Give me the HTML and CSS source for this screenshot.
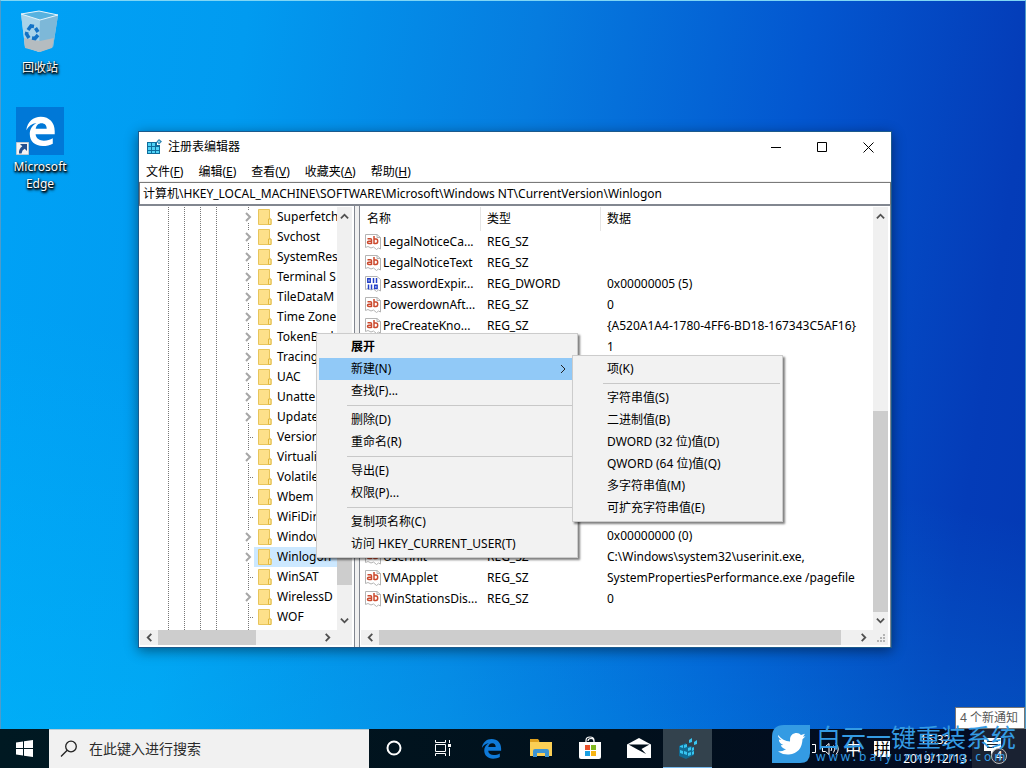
FILE: index.html
```html
<!DOCTYPE html>
<html lang="zh-CN">
<head>
    <meta charset="UTF-8">
    <meta name="viewport" content="width=device-width, initial-scale=1.0">
    <title>注册表编辑器</title>
    <link rel="stylesheet" href="styles.css">
</head>
<body>
    <!-- 图标 -->
    <svg class="sprite" aria-hidden="true">
        <symbol id="folder" viewBox="0 0 14 16">
            <path d="M.5 .5h11v9.500h1.500v5.500H.5z" fill="#fde08a" stroke="#e8c55c"/>
            <path d="M10.500 15.500V10h2.500v5.500z" fill="#fbe9a8" stroke="#e3b93e"/>
        </symbol>
        <symbol id="sz" viewBox="0 0 16 16">
            <path d="M.5 .5h11.500l3.500 3v11.500l-2-1-2 1.500-3-2.500-2.500 1-3-1.500-2.500 1z" fill="#fff" stroke="#b4b4b4"/>
            <path d="M12 .5v3h3.500" fill="none" stroke="#b4b4b4"/>
            <path d="M2.500 4.800h3q1 0 1 1V10M6.500 7.200H3.800Q2.500 7.200 2.500 8.300t1.300 1.100h2.700M9 2v8M9 5h2q1.700 0 1.700 2.200T11 9.400H9" fill="none" stroke="#cc4a2e" stroke-width="1.500"/>
        </symbol>
        <symbol id="dword" viewBox="0 0 16 16">
            <path d="M.5 .5h11.500l3.500 3v11.500l-2-1-2 1.500-3-2.500-2.500 1-3-1.500-2.500 1z" fill="#fff" stroke="#b4b4b4"/>
            <path d="M2.800 2.800h2.400v3.400H2.800zM8.500 2v5M11.500 2v5M3.500 8.500v5M6.500 8.500v5M9.700 9.200h2.400v3.400H9.700z" fill="none" stroke="#2340c8" stroke-width="1.500"/>
        </symbol>
        <symbol id="left" viewBox="0 0 10 10"><path d="M7 1L3 5l4 4" fill="none" stroke="#505050" stroke-width="2"/></symbol>
        <symbol id="right" viewBox="0 0 10 10"><path d="M3 1l4 4-4 4" fill="none" stroke="#505050" stroke-width="2"/></symbol>
        <symbol id="up" viewBox="0 0 10 10"><path d="M1 7l4-4 4 4" fill="none" stroke="#505050" stroke-width="2"/></symbol>
        <symbol id="down" viewBox="0 0 10 10"><path d="M1 3l4 4 4-4" fill="none" stroke="#505050" stroke-width="2"/></symbol>
        <symbol id="expand" viewBox="0 0 8 10"><path d="M2 1l4 4-4 4" fill="none" stroke="#a6a6a6" stroke-width="2"/></symbol>
        <symbol id="edge" viewBox="0 0 24 24">
            <path d="M1 11.500C1.800 4.800 6.400 1 12.200 1 19 1 23 5.800 23 12v2.600H8.200c.3 3.300 3.200 4.900 6.400 4.900 2.600 0 4.900-.7 6.900-1.900v4.200c-2.200 1.200-4.800 1.800-7.700 1.800C7.600 23.600 3.700 20 3.700 14.400c0-3.700 2-6.800 5.200-8.500C5.500 6.300 2.600 8.300 1 11.500zM8.300 10.200h8.500c0-2.500-1.400-4.200-4-4.200-2.400 0-4.100 1.700-4.500 4.200z" fill="currentColor"/>
        </symbol>
    </svg>

    <main class="desktop">
        <a href="#" class="shortcut recycle">
            <svg width="40" height="44" viewBox="0 0 40 44">
                <path d="M1 4l18-3 19 4-5 32-14 5-14-5z" fill="#9fcfea"/>
                <path d="M1 4l19 6-1 32-14-5z" fill="#a8d3e9"/>
                <path d="M20 10l18-5-5 32-14 5z" fill="#7db8d8"/>
                <path d="M4 28l16 3 14-3-2 10-12 4-15-4z" fill="#b5bcc0"/>
                <path d="M1 4l18-3 19 4-18 5z" fill="#57b2df" stroke="#e4f4fc"/>
                <path d="M8 20l3-4 3 .5M15.500 18l2.500 4M18 25l-3 3.500-3-.5M9 28l-2.500-4 .5-2" fill="none" stroke="#1272c6" stroke-width="3.500"/>
            </svg>
            <span>回收站</span>
        </a>
        <a href="#" class="shortcut edge">
            <span class="edge-tile">
                <svg width="31" height="32"><use href="#edge"/></svg>
                <svg class="link-arrow" width="13" height="13" viewBox="0 0 13 13">
                    <path d="M.5 .5h12v12H.5z" fill="#f4f4f4" stroke="#c0c8d0"/>
                    <path d="M4 2h7v7L8.700 6.700Q6 8 5.500 11.500H3Q2.500 7 6.300 4.300z" fill="#24508f"/>
                </svg>
            </span>
            <span>Microsoft<br>Edge</span>
        </a>

        <section class="window">
            <header class="titlebar">
                <svg width="16" height="16" viewBox="0 0 16 16">
                    <path d="M1 3h10v3h3v9H1z" fill="#0e6d9c"/>
                    <path d="M2 4h3v3H2zM6 4h3v3H6zM2 8h3v3H2zM6 8h3v3H6zM10 8h3v3h-3zM2 12h3v2H2zM6 12h3v2H6zM10 12h3v2h-3z" fill="#4fd2f6"/>
                    <path d="M13 0l3 2.500L13 5.500 10.500 2.500z" fill="#3188b4"/>
                    <path d="M13 1.500l1.200 1.200L13 4l-1.200-1.300z" fill="#8be0fa"/>
                </svg>
                <h1>注册表编辑器</h1>
                <div class="window-buttons">
                    <button type="button" aria-label="最小化"><svg width="11" height="11"><path d="M0 5.500h10" stroke="#000"/></svg></button>
                    <button type="button" aria-label="最大化"><svg width="11" height="11"><path d="M.5 .5h9v9h-9z" fill="none" stroke="#000"/></svg></button>
                    <button type="button" aria-label="关闭"><svg width="11" height="11"><path d="M.5 .5l10 10M10.500 .5l-10 10" stroke="#000"/></svg></button>
                </div>
            </header>
            <nav class="menubar">
                <button type="button">文件(<u>F</u>)</button>
                <button type="button">编辑(<u>E</u>)</button>
                <button type="button">查看(<u>V</u>)</button>
                <button type="button">收藏夹(<u>A</u>)</button>
                <button type="button">帮助(<u>H</u>)</button>
            </nav>
            <input class="address" type="text" aria-label="地址" value="计算机\HKEY_LOCAL_MACHINE\SOFTWARE\Microsoft\Windows NT\CurrentVersion\Winlogon">

            <div class="panes">
                <div class="pane tree-pane">
                    <ul class="tree">
                        <li><i class="toggle"><svg><use href="#expand"/></svg></i><span><svg><use href="#folder"/></svg>Superfetch</span></li>
                        <li><i class="toggle"><svg><use href="#expand"/></svg></i><span><svg><use href="#folder"/></svg>Svchost</span></li>
                        <li><i class="toggle"><svg><use href="#expand"/></svg></i><span><svg><use href="#folder"/></svg>SystemRes</span></li>
                        <li><i class="toggle"><svg><use href="#expand"/></svg></i><span><svg><use href="#folder"/></svg>Terminal S</span></li>
                        <li><i class="toggle"><svg><use href="#expand"/></svg></i><span><svg><use href="#folder"/></svg>TileDataM</span></li>
                        <li><i class="toggle"><svg><use href="#expand"/></svg></i><span><svg><use href="#folder"/></svg>Time Zone</span></li>
                        <li><i class="toggle"><svg><use href="#expand"/></svg></i><span><svg><use href="#folder"/></svg>TokenBrok</span></li>
                        <li><i class="toggle"><svg><use href="#expand"/></svg></i><span><svg><use href="#folder"/></svg>Tracing</span></li>
                        <li><i class="toggle"><svg><use href="#expand"/></svg></i><span><svg><use href="#folder"/></svg>UAC</span></li>
                        <li><i class="toggle"><svg><use href="#expand"/></svg></i><span><svg><use href="#folder"/></svg>Unatte</span></li>
                        <li><i class="toggle"><svg><use href="#expand"/></svg></i><span><svg><use href="#folder"/></svg>Update</span></li>
                        <li><i class="leaf"></i><span><svg><use href="#folder"/></svg>Version</span></li>
                        <li><i class="toggle"><svg><use href="#expand"/></svg></i><span><svg><use href="#folder"/></svg>Virtuali</span></li>
                        <li><i class="leaf"></i><span><svg><use href="#folder"/></svg>Volatile</span></li>
                        <li><i class="leaf"></i><span><svg><use href="#folder"/></svg>Wbem</span></li>
                        <li><i class="leaf"></i><span><svg><use href="#folder"/></svg>WiFiDir</span></li>
                        <li><i class="toggle"><svg><use href="#expand"/></svg></i><span><svg><use href="#folder"/></svg>Window</span></li>
                        <li class="selected"><i class="toggle"><svg><use href="#expand"/></svg></i><span><svg><use href="#folder"/></svg>Winlogon</span></li>
                        <li><i class="leaf"></i><span><svg><use href="#folder"/></svg>WinSAT</span></li>
                        <li><i class="toggle"><svg><use href="#expand"/></svg></i><span><svg><use href="#folder"/></svg>WirelessD</span></li>
                        <li><i class="leaf"></i><span><svg><use href="#folder"/></svg>WOF</span></li>
                    </ul>
                    <div class="vscroll">
                        <svg><use href="#up"/></svg>
                        <div class="track"><div class="thumb tree-thumb"></div></div>
                        <svg><use href="#down"/></svg>
                    </div>
                    <div class="hscroll">
                        <svg><use href="#left"/></svg>
                        <div class="track"><div class="thumb tree-hthumb"></div></div>
                        <svg><use href="#right"/></svg>
                    </div>
                    <div class="corner"></div>
                </div>

                <div class="pane list-pane">
                    <div class="list">
                        <table>
                            <thead>
                                <tr><th class="name">名称</th><th class="type">类型</th><th>数据</th></tr>
                            </thead>
                            <tbody>
                                <tr><td><svg><use href="#sz"/></svg>LegalNoticeCa...</td><td>REG_SZ</td><td></td></tr>
                                <tr><td><svg><use href="#sz"/></svg>LegalNoticeText</td><td>REG_SZ</td><td></td></tr>
                                <tr><td><svg><use href="#dword"/></svg>PasswordExpir...</td><td>REG_DWORD</td><td>0x00000005 (5)</td></tr>
                                <tr><td><svg><use href="#sz"/></svg>PowerdownAft...</td><td>REG_SZ</td><td>0</td></tr>
                                <tr><td><svg><use href="#sz"/></svg>PreCreateKno...</td><td>REG_SZ</td><td>{A520A1A4-1780-4FF6-BD18-167343C5AF16}</td></tr>
                                <tr><td></td><td></td><td>1</td></tr>
                                <tr><td></td><td></td><td></td></tr>
                                <tr><td></td><td></td><td></td></tr>
                                <tr><td></td><td></td><td></td></tr>
                                <tr><td></td><td></td><td></td></tr>
                                <tr><td></td><td></td><td></td></tr>
                                <tr><td></td><td></td><td></td></tr>
                                <tr><td></td><td></td><td></td></tr>
                                <tr><td></td><td></td><td></td></tr>
                                <tr><td></td><td></td><td>0x00000000 (0)</td></tr>
                                <tr><td><svg><use href="#sz"/></svg>Userinit</td><td>REG_SZ</td><td>C:\Windows\system32\userinit.exe,</td></tr>
                                <tr><td><svg><use href="#sz"/></svg>VMApplet</td><td>REG_SZ</td><td>SystemPropertiesPerformance.exe /pagefile</td></tr>
                                <tr><td><svg><use href="#sz"/></svg>WinStationsDis...</td><td>REG_SZ</td><td>0</td></tr>
                            </tbody>
                        </table>
                    </div>
                    <div class="vscroll">
                        <svg><use href="#up"/></svg>
                        <div class="track"><div class="thumb list-thumb"></div></div>
                        <svg><use href="#down"/></svg>
                    </div>
                    <div class="hscroll">
                        <svg><use href="#left"/></svg>
                        <div class="track"><div class="thumb list-hthumb"></div></div>
                        <svg><use href="#right"/></svg>
                    </div>
                    <div class="corner">
                        <svg width="9" height="9" viewBox="0 0 9 9"><path d="M6 0h2v2H6zM3 3h2v2H3zM6 3h2v2H6zM0 6h2v2H0zM3 6h2v2H3zM6 6h2v2H6z" fill="#b4b4b4"/></svg>
                    </div>
                </div>
            </div>
        </section>

        <div class="menu context-menu">
            <button type="button" class="default">展开</button>
            <button type="button" class="active">新建(N)<svg width="8" height="10" viewBox="0 0 8 10"><path d="M2 1l4 4-4 4" fill="none" stroke="#222"/></svg></button>
            <button type="button">查找(F)...</button>
            <hr>
            <button type="button">删除(D)</button>
            <button type="button">重命名(R)</button>
            <hr>
            <button type="button">导出(E)</button>
            <button type="button">权限(P)...</button>
            <hr>
            <button type="button">复制项名称(C)</button>
            <button type="button">访问 HKEY_CURRENT_USER(T)</button>
        </div>
        <div class="menu submenu">
            <button type="button">项(K)</button>
            <hr>
            <button type="button">字符串值(S)</button>
            <button type="button">二进制值(B)</button>
            <button type="button">DWORD (32 位)值(D)</button>
            <button type="button">QWORD (64 位)值(Q)</button>
            <button type="button">多字符串值(M)</button>
            <button type="button">可扩充字符串值(E)</button>
        </div>

        <div class="tooltip">4 个新通知</div>
    </main>

    <footer class="taskbar">
        <button type="button" class="start" aria-label="开始">
            <svg width="17" height="17" viewBox="0 0 17 17"><path d="M0 2.500l7-1V8H0zM8 1.300L17 0v8H8zM0 9h7v6.500l-7-1zM8 9h9v8l-9-1.300z" fill="#fff"/></svg>
        </button>
        <label class="search">
            <svg width="18" height="18" viewBox="0 0 18 18"><circle cx="11" cy="6.500" r="5.300" fill="none" stroke="#222" stroke-width="1.300"/><path d="M7.200 10.300L1 16.500" stroke="#222" stroke-width="1.300"/></svg>
            <input type="text" placeholder="在此键入进行搜索" aria-label="搜索">
        </label>
        <nav class="apps">
            <button type="button" aria-label="Cortana"><svg width="16" height="16"><circle cx="8" cy="8" r="6.500" fill="none" stroke="#fff" stroke-width="2"/></svg></button>
            <button type="button" aria-label="任务视图"><svg width="18" height="16" viewBox="0 0 18 16"><path d="M1.500 0v2.500h10V0M1.500 4.500h10v7h-10zM1.500 16v-2.500h10V16M15.500 0v3M15.500 8v8" fill="none" stroke="#fff"/><path d="M14 4h3v3h-3z" fill="#fff"/></svg></button>
            <button type="button" aria-label="Edge" class="edge-app"><svg width="21" height="21"><use href="#edge"/></svg></button>
            <button type="button" aria-label="文件资源管理器"><svg width="22" height="19" viewBox="0 0 22 19"><path d="M0 1h8l1.500 2H22v14H0z" fill="#fbcf55"/><path d="M0 0h8l1.500 2-1.500 1H0z" fill="#dfa01d"/><path d="M3 18v-6q0-2 2-2h12q2 0 2 2v6h-4v-4H7v4z" fill="#3d94d2"/></svg></button>
            <button type="button" aria-label="应用商店"><svg width="24" height="24" viewBox="0 0 24 24"><path d="M8 7V4.500q0-3.500 4-3.500t4 3.500V7M10 5q0-2.500 3-2.500T16 5v2" fill="none" stroke="#fff" stroke-width="1.200"/><path d="M1 6h22v15q0 2-2 2H3q-2 0-2-2z" fill="#fff"/><path d="M7 9h5v5H7z" fill="#e8502a"/><path d="M13 9h5v5h-5z" fill="#80b81f"/><path d="M7 15h5v5H7z" fill="#1ba0e2"/><path d="M13 15h5v5h-5z" fill="#f8b412"/></svg></button>
            <button type="button" aria-label="邮件"><svg width="24" height="20" viewBox="0 0 24 20"><path d="M0 6.500L12 0l12 6.500V20H0z" fill="#fff"/><path d="M1.500 6.500h21L14.500 11l4.500 5-8.500-4.500z" fill="#02101c"/></svg></button>
            <button type="button" aria-label="注册表编辑器" class="running"><svg width="22" height="22" viewBox="0 0 22 22"><path d="M2 9l7-3v4l5-1 3 2v7l-8 4-7-3z" fill="#126c94"/><path d="M3 9l3-1v3l-3-1zM7 8l3-1v3L7 11zM3 13l3 1v3l-3-1zM7 14l3 1v3l-3-1zM11 11l3-1v3l-3 1zM11 16l3-1v3l-3 1zM15 11l2-1v3l-2 1zM15 15l2-1v3l-2 1zM12 3l3-2v4l-3 1zM17 5l3-2v4l-3 1z" fill="#38c5f0"/></svg></button>
        </nav>
        <div class="tray">
            <svg width="5" height="12" viewBox="0 0 5 12"><path d="M0 1.500h3.500v8H0" fill="none" stroke="#fff"/></svg>
            <svg width="18" height="14" viewBox="0 0 18 14"><path d="M.5 4.500h3L7 1.500v11l-3.500-3h-3zM9 5q1.500 2 0 4M11.500 3.500q3 3.500 0 7M14 1.500q4.500 5.500 0 11" fill="none" stroke="#fff"/></svg>
            <span class="ime">中</span>
            <span class="ime pinyin">拼</span>
            <time class="clock">15:32<br>2019/12/13</time>
            <button type="button" class="notifications" aria-label="通知">
                <svg width="17" height="17" viewBox="0 0 17 17"><path d="M0 0h17v13h-6l-4 4v-4H0z" fill="#fff"/><path d="M3 3.500h11M3 6.500h11M3 9.500h7" stroke="#17202a"/></svg>
                <span class="badge">4</span>
            </button>
        </div>
    </footer>

    <div class="watermark">
        <svg width="38" height="38" viewBox="0 0 38 38">
            <path d="M12 0h26v28q0 10-10 10H0V12Q0 0 12 0z" fill="#349be3"/>
            <path d="M6 10q5 6 12 6.500-1-7 5.500-8.500 3.500-.5 5.500 2l4-1.200-2 3 2.500-.5-3 3Q30 28 17 29.500q-6 .5-11-3 5 0 8-2.300-4-.8-5.200-4l2.500-.2Q7 18 6.800 14.500l2.500 .6Q5.500 12 6 10z" fill="#fff"/>
        </svg>
        <div>
            <strong>白云一键重装系统</strong>
            <span>www.baiyunxitong.com</span>
        </div>
    </div>
</body>
</html>
```
FILE: styles.css
```css
* {
    margin: 0;
    padding: 0;
    box-sizing: border-box;
}

body {
    display: flex;
    flex-direction: column;
    height: 100vh;
    overflow: hidden;
    font-family: "Noto Sans", "Noto Sans CJK SC", sans-serif;
    font-size: 12px;
    line-height: 16px;
    color: #000;
}

button,
input {
    font: inherit;
    color: inherit;
    background: none;
    border: 0;
    outline: 0;
}

ul {
    list-style: none;
}

svg {
    flex: none;
}

.sprite {
    position: absolute;
    width: 0;
    height: 0;
}

/* 桌面 */
.desktop {
    position: relative;
    flex: 1;
    padding: 9px 0 0 4px;
    border: 1px solid #4d9ccb;
    border-bottom: 0;
    border-top-color: #7fd6f5;
    background:
        linear-gradient(12deg, rgba(0, 205, 255, 0.3), transparent 45%),
        linear-gradient(98deg, #00a2f6 0%, #019bf0 22%, #067cdf 48%, #0357d0 72%, #043cb8 92%, #0439b4 100%);
}

.shortcut {
    display: flex;
    flex-direction: column;
    align-items: center;
    width: 70px;
    color: #fff;
    text-align: center;
    text-decoration: none;
    line-height: 17px;
    text-shadow: 0 1px 2px #000, 1px 1px 2px #000, 1px 2px 3px #000;
}

.recycle {
    height: 97px;
    gap: 5px;
}

.edge {
    gap: 3px;
}

.edge-tile {
    position: relative;
    display: flex;
    align-items: center;
    justify-content: center;
    width: 48px;
    height: 48px;
    background: #0078d7;
}

.link-arrow {
    position: absolute;
    left: 0;
    bottom: 0;
}

/* 窗口 */
.window {
    position: absolute;
    top: 130px;
    right: 133px;
    bottom: 81px;
    left: 137px;
    display: flex;
    flex-direction: column;
    background: #fff;
    border: 1px solid #1c5a8c;
    box-shadow: 0 3px 12px rgba(0, 0, 0, 0.45);
}

.titlebar {
    display: flex;
    align-items: center;
    height: 30px;
    padding-left: 7px;
}

.titlebar h1 {
    flex: 1;
    padding-left: 6px;
    font-size: 12px;
    font-weight: 400;
}

.window-buttons {
    display: flex;
}

.window-buttons button {
    display: flex;
    align-items: center;
    justify-content: center;
    width: 46px;
    height: 28px;
}

.menubar {
    display: flex;
    gap: 15px;
    height: 20px;
    padding-left: 7px;
    border-bottom: 1px solid #f0f0f0;
}

.address {
    height: 24px;
    padding: 0 3px 1px;
    border: 1px solid #7a7a7a;
    border-bottom: 2px solid #828790;
}

.panes {
    display: flex;
    flex: 1;
    min-height: 0;
    gap: 4px;
    background: #f0f0f0;
}

.pane {
    display: grid;
    grid-template-columns: 1fr 15px;
    grid-template-rows: 1fr 15px;
    padding: 1px 2px 2px 1px;
    border-right: 1px solid #828790;
    background: #fff;
}

.tree-pane {
    width: 216px;
}

.list-pane {
    flex: 1;
    min-width: 0;
    border-left: 1px solid #828790;
}

.tree {
    overflow: hidden;
    background:
        repeating-linear-gradient(#777 0 1px, #fff 1px 2px) 28px 0 / 1px 100% no-repeat,
        repeating-linear-gradient(#777 0 1px, #fff 1px 2px) 44px 0 / 1px 100% no-repeat,
        repeating-linear-gradient(#777 0 1px, #fff 1px 2px) 60px 0 / 1px 100% no-repeat,
        repeating-linear-gradient(#777 0 1px, #fff 1px 2px) 76px 0 / 1px 100% no-repeat,
        repeating-linear-gradient(#777 0 1px, #fff 1px 2px) 108px 0 / 1px 100% no-repeat;
}

.tree li {
    display: flex;
    height: 20px;
    padding-left: 101px;
    line-height: 20px;
}

.tree span {
    display: flex;
    flex: 1;
    align-items: center;
    gap: 5px;
    min-width: 0;
    padding-left: 4px;
    overflow: hidden;
    white-space: nowrap;
}

.tree span svg {
    width: 14px;
    height: 16px;
}

.toggle,
.leaf {
    display: flex;
    align-items: center;
    width: 13px;
    padding-left: 3px;
}

.toggle svg {
    width: 8px;
    height: 12px;
    background: #fff;
}

.leaf {
    background: repeating-linear-gradient(90deg, #777 0 1px, #fff 1px 2px) 7px 10px / 6px 1px no-repeat;
}

.selected span {
    background: #cce8ff;
}

.vscroll,
.hscroll {
    display: flex;
    align-items: center;
    background: #f0f0f0;
}

.vscroll {
    flex-direction: column;
    padding: 5px 0;
}

.hscroll {
    padding: 0 5px;
}

.vscroll svg,
.hscroll svg {
    width: 9px;
    height: 9px;
}

.track {
    display: flex;
    flex: 1;
    align-self: stretch;
}

.vscroll .track {
    flex-direction: column;
    justify-content: flex-end;
    padding: 4px 0;
}

.hscroll .track {
    padding: 0 4px;
}

.thumb {
    background: #cdcdcd;
}

.tree-thumb {
    height: 28%;
    margin-bottom: 27px;
}

.tree-hthumb {
    width: 61%;
}

.list-thumb {
    height: 52%;
}

.list-hthumb {
    width: 97%;
}

.corner {
    display: flex;
    align-items: flex-end;
    justify-content: flex-end;
    padding: 2px;
    background: #f0f0f0;
}

/* 值列表 */
.list {
    overflow: hidden;
}

table {
    width: 100%;
    border-spacing: 0;
    table-layout: fixed;
    white-space: nowrap;
}

th {
    height: 24px;
    padding-left: 6px;
    font-weight: 400;
    text-align: left;
    border-right: 1px solid #e5e5e5;
}

th:last-child {
    border-right: 0;
}

.name,
.type {
    width: 120px;
}

td {
    height: 21px;
    padding-left: 6px;
}

td:first-child {
    padding-left: 4px;
}

td svg {
    width: 16px;
    height: 16px;
    margin-right: 2px;
    vertical-align: top;
}

/* 右键菜单 */
.menu {
    position: absolute;
    padding: 2px;
    background: #f2f2f2;
    border: 1px solid #ccc;
    box-shadow: 2px 2px 2px rgba(0, 0, 0, 0.5);
}

.menu button {
    display: flex;
    align-items: center;
    justify-content: space-between;
    width: 100%;
    height: 22px;
    padding: 0 8px 0 32px;
    text-align: left;
    white-space: nowrap;
}

.menu hr {
    height: 1px;
    margin: 3px 0 3px 28px;
    border: 0;
    background: #c8c8c8;
}

.menu .default {
    font-weight: 700;
}

.menu .active {
    background: #91c9f7;
}

.context-menu {
    top: 332px;
    left: 315px;
    width: 262px;
}

.submenu {
    top: 354px;
    left: 571px;
    width: 211px;
}

.tooltip {
    position: absolute;
    right: 0;
    bottom: 0;
    padding: 2px 6px 2px 4px;
    color: #575757;
    background: #fff;
    border: 1px solid #767676;
}

/* 任务栏 */
.taskbar {
    display: flex;
    height: 39px;
    color: #fff;
    background: linear-gradient(90deg, #001922, #01101c 60%, #030b24);
}

.start {
    width: 49px;
}

.start svg {
    vertical-align: middle;
}

.search {
    display: flex;
    align-items: center;
    gap: 11px;
    width: 320px;
    padding-left: 11px;
    color: #2b2b2b;
    background: #f1f1f1;
    border-top: 1px solid #b9cdd6;
}

.search input {
    width: 240px;
    font-size: 14px;
}

.search input::placeholder {
    color: #2b2b2b;
}

.apps {
    display: flex;
    flex: 1;
}

.apps button {
    display: flex;
    align-items: center;
    justify-content: center;
    width: 49px;
    border-bottom: 1px solid transparent;
}

.apps .edge-app {
    color: #0f7ad8;
}

.apps .running {
    background: #33424d;
    border-color: #76b9ed;
}

.tray {
    display: flex;
    align-items: center;
    gap: 5px;
}

.ime {
    width: 16px;
    font-size: 16px;
}

.pinyin {
    margin: 0 8px;
    color: #000;
    background: #fff;
}

.clock {
    line-height: 19px;
    text-align: center;
}

.notifications {
    position: relative;
    width: 54px;
    height: 39px;
    padding-right: 14px;
    background: #1a2232;
}

.badge {
    position: absolute;
    right: 19px;
    bottom: 4px;
    width: 16px;
    height: 16px;
    border: 1px solid #bbb;
    border-radius: 8px;
    background: #2a3242;
    line-height: 14px;
}

/* 水印 */
.watermark {
    position: absolute;
    right: 10px;
    bottom: 5px;
    display: flex;
    gap: 6px;
    color: #349be3;
    pointer-events: none;
}

.watermark div {
    display: flex;
    flex-direction: column;
}

.watermark strong {
    font-size: 25px;
    font-weight: 400;
    line-height: 25px;
}

.watermark span {
    font-size: 12px;
    line-height: 13px;
    letter-spacing: 3px;
}
```
